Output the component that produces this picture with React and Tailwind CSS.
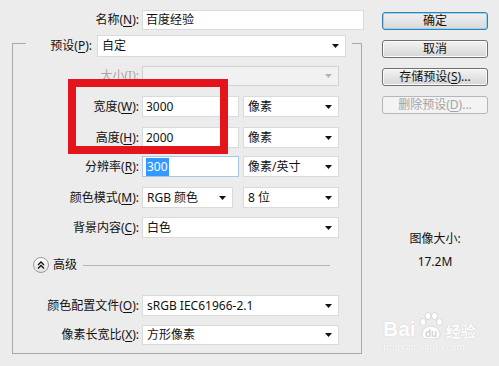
const FONT = "font-['Noto_Sans','Noto_Sans_CJK_SC',sans-serif]";

function Label({ text, k, disabled, className = 'w-[126px]' }) {
  return (
    <div
      className={
        'shrink-0 whitespace-nowrap text-right text-[12px] leading-none ' +
        className +
        (disabled ? ' text-[#a6a6a6]' : ' text-[#111]')
      }
    >
      {text}(<span className="underline underline-offset-2">{k}</span>):
    </div>
  );
}

function Arrow({ disabled }) {
  return (
    <svg width="7" height="4" viewBox="0 0 7 4" aria-hidden="true" className="shrink-0">
      <path d="M0 0h7L3.5 4z" fill={disabled ? '#b4b4b4' : '#111'} />
    </svg>
  );
}

function Field({ w, h = 'h-[21px]', children, focused }) {
  return (
    <div
      className={
        'flex items-center bg-white pl-[3px] text-[12px] leading-none text-[#111] border ' +
        w +
        ' ' +
        h +
        (focused ? ' border-[#a9c6e4]' : ' border-[#dadada]')
      }
    >
      {children}
    </div>
  );
}

function Select({ w, h = 'h-[21px]', value, disabled }) {
  return (
    <div
      className={
        'flex items-center justify-between pl-[4px] pr-[6px] text-[12px] leading-none text-[#111] border ' +
        w +
        ' ' +
        h +
        (disabled ? ' bg-[#f1f1f1] border-[#d2d2d2]' : ' bg-white border-[#dadada]')
      }
    >
      <span className="whitespace-nowrap">{value}</span>
      <Arrow disabled={disabled} />
    </div>
  );
}

function Button({ children, variant = 'normal' }) {
  const base =
    'flex h-[18px] w-[106px] items-center justify-center rounded-[3px] border text-[12px] leading-none ';
  if (variant === 'default') {
    return (
      <div className={base + 'border-[#3c7fb1] bg-linear-to-b from-[#f0f0f0] to-[#d9d9d9] text-[#111] shadow-[inset_0_0_0_1px_#8fd6f3]'}>
        {children}
      </div>
    );
  }
  if (variant === 'disabled') {
    return (
      <div className={base + 'border-[#b4b8bb] bg-[#f3f3f3] text-[#a3a3a3]'}>{children}</div>
    );
  }
  return (
    <div className={base + 'border-[#707070] bg-linear-to-b from-[#f3f3f3] to-[#d6d6d6] text-[#111] shadow-[inset_0_0_0_1px_#fbfbfb]'}>
      {children}
    </div>
  );
}

function Watermark() {
  return (
    <div className="absolute left-[383px] top-[311px] flex flex-col items-start">
      <div className="flex items-end gap-[2px]">
        <span className="font-['Liberation_Sans',sans-serif] text-[21px] font-bold leading-none text-white [text-shadow:0_0_1px_#bdbdbd]">
          Bai
        </span>
        <svg width="26" height="28" viewBox="0 0 26 28" aria-hidden="true">
          <g fill="#fff" stroke="#cfcfcf" strokeWidth="0.8">
            <ellipse cx="5" cy="11" rx="3" ry="3.5" />
            <ellipse cx="10" cy="5" rx="3" ry="3.5" />
            <ellipse cx="16.5" cy="5" rx="3" ry="3.5" />
            <ellipse cx="21.5" cy="11" rx="3" ry="3.5" />
            <path d="M4 24c0-6 5-9 9-9s9 3 9 9c0 3-3 4-9 4s-9-1-9-4z" />
          </g>
          <text x="13" y="26" textAnchor="middle" fontSize="10" fontWeight="700" fill="#d2d2d2" fontFamily="Liberation Sans, sans-serif">
            du
          </text>
        </svg>
        <span className="text-[15px] font-bold leading-none text-white [text-shadow:0_0_1px_#b9b9b9]">
          经验
        </span>
      </div>
      <div className="mt-[2px] font-['Liberation_Serif',serif] text-[11px] leading-none text-white [text-shadow:0_0_1px_#c4c4c4]">
        jingyan.baidu.com
      </div>
    </div>
  );
}

export default function App() {
  return (
    <div className={'relative flex h-[366px] w-[499px] overflow-hidden bg-[#ececec] ' + FONT}>
      <div className="w-[382px] shrink-0">
        <div className="mt-[10px] flex h-[20px] items-center">
          <Label text="名称" k="N" className="w-[139px]" />
          <div className="ml-[3px]">
            <Field w="w-[222px]" h="h-[20px]">百度经验</Field>
          </div>
        </div>

        <div className="ml-[12px] mt-[13px] h-[311px] w-[350px] border border-[#a9a9a9]">
          <div className="-mt-[9px] ml-[13px] flex h-[22px] w-[326px] items-center bg-[#ececec]">
            <Label text="预设" k="P" className="w-[66px]" />
            <div className="ml-[5px]">
              <Select w="w-[249px]" h="h-[22px]" value="自定" />
            </div>
          </div>

          <div className="mt-[9px] flex h-[20px] items-center">
            <Label text="大小" k="I" disabled />
            <div className="ml-[3px]">
              <Select w="w-[197px]" h="h-[20px]" value="" disabled />
            </div>
          </div>

          <div className="mt-[10px] flex h-[21px] items-center">
            <Label text="宽度" k="W" />
            <div className="ml-[3px] flex gap-[4px]">
              <Field w="w-[97px]">3000</Field>
              <Select w="w-[96px]" value="像素" />
            </div>
          </div>

          <div className="mt-[10px] flex h-[21px] items-center">
            <Label text="高度" k="H" />
            <div className="ml-[3px] flex gap-[4px]">
              <Field w="w-[97px]">2000</Field>
              <Select w="w-[96px]" value="像素" />
            </div>
          </div>

          <div className="mt-[8px] flex h-[21px] items-center">
            <Label text="分辨率" k="R" />
            <div className="ml-[3px] flex gap-[4px]">
              <Field w="w-[97px]" focused>
                <span className="bg-[#3399ff] px-px py-[3px] text-white">300</span>
              </Field>
              <Select w="w-[96px]" value="像素/英寸" />
            </div>
          </div>

          <div className="mt-[10px] flex h-[21px] items-center">
            <Label text="颜色模式" k="M" />
            <div className="ml-[3px] flex gap-[10px]">
              <Select w="w-[91px]" value="RGB 颜色" />
              <Select w="w-[96px]" value="8 位" />
            </div>
          </div>

          <div className="mt-[9px] flex h-[21px] items-center">
            <Label text="背景内容" k="C" />
            <div className="ml-[3px]">
              <Select w="w-[197px]" value="白色" />
            </div>
          </div>

          <div className="ml-[20px] mt-[19px] flex h-[16px] items-center">
            <div className="flex h-[16px] w-[16px] items-center justify-center rounded-full border border-[#9a9a9a] bg-linear-to-b from-white to-[#e2e2e2]">
              <svg width="8" height="8" viewBox="0 0 8 8" aria-hidden="true">
                <path d="M1 4l3-3 3 3M1 7.5l3-3 3 3" fill="none" stroke="#111" strokeWidth="1.3" />
              </svg>
            </div>
            <span className="ml-[4px] text-[12px] leading-none text-[#111]">高级</span>
            <div className="ml-[6px] h-px w-[247px] bg-[#b4b4b4]" />
          </div>

          <div className="mt-[22px] flex h-[21px] items-center">
            <Label text="颜色配置文件" k="O" />
            <div className="ml-[3px]">
              <Select w="w-[197px]" value="sRGB IEC61966-2.1" />
            </div>
          </div>

          <div className="mt-[9px] flex h-[20px] items-center">
            <Label text="像素长宽比" k="X" />
            <div className="ml-[3px]">
              <Select w="w-[197px]" h="h-[20px]" value="方形像素" />
            </div>
          </div>
        </div>
      </div>

      <div className="w-[106px] shrink-0">
        <div className="mt-[12px] flex flex-col gap-[10px]">
          <Button variant="default">确定</Button>
          <Button>取消</Button>
          <Button>
            存储预设(<span className="underline underline-offset-2">S</span>)...
          </Button>
          <Button variant="disabled">
            删除预设(<span className="underline underline-offset-2">D</span>)...
          </Button>
        </div>
        <div className="mt-[117px] text-center text-[12px] leading-[16px] text-[#111]">图像大小:</div>
        <div className="mt-[7px] text-center text-[12px] leading-[16px] text-[#111]">17.2M</div>
      </div>

      <div className="pointer-events-none absolute left-[68px] top-[79px] h-[75px] w-[160px] border-[8px] border-[#e3141b]" />
      <Watermark />
    </div>
  );
}
